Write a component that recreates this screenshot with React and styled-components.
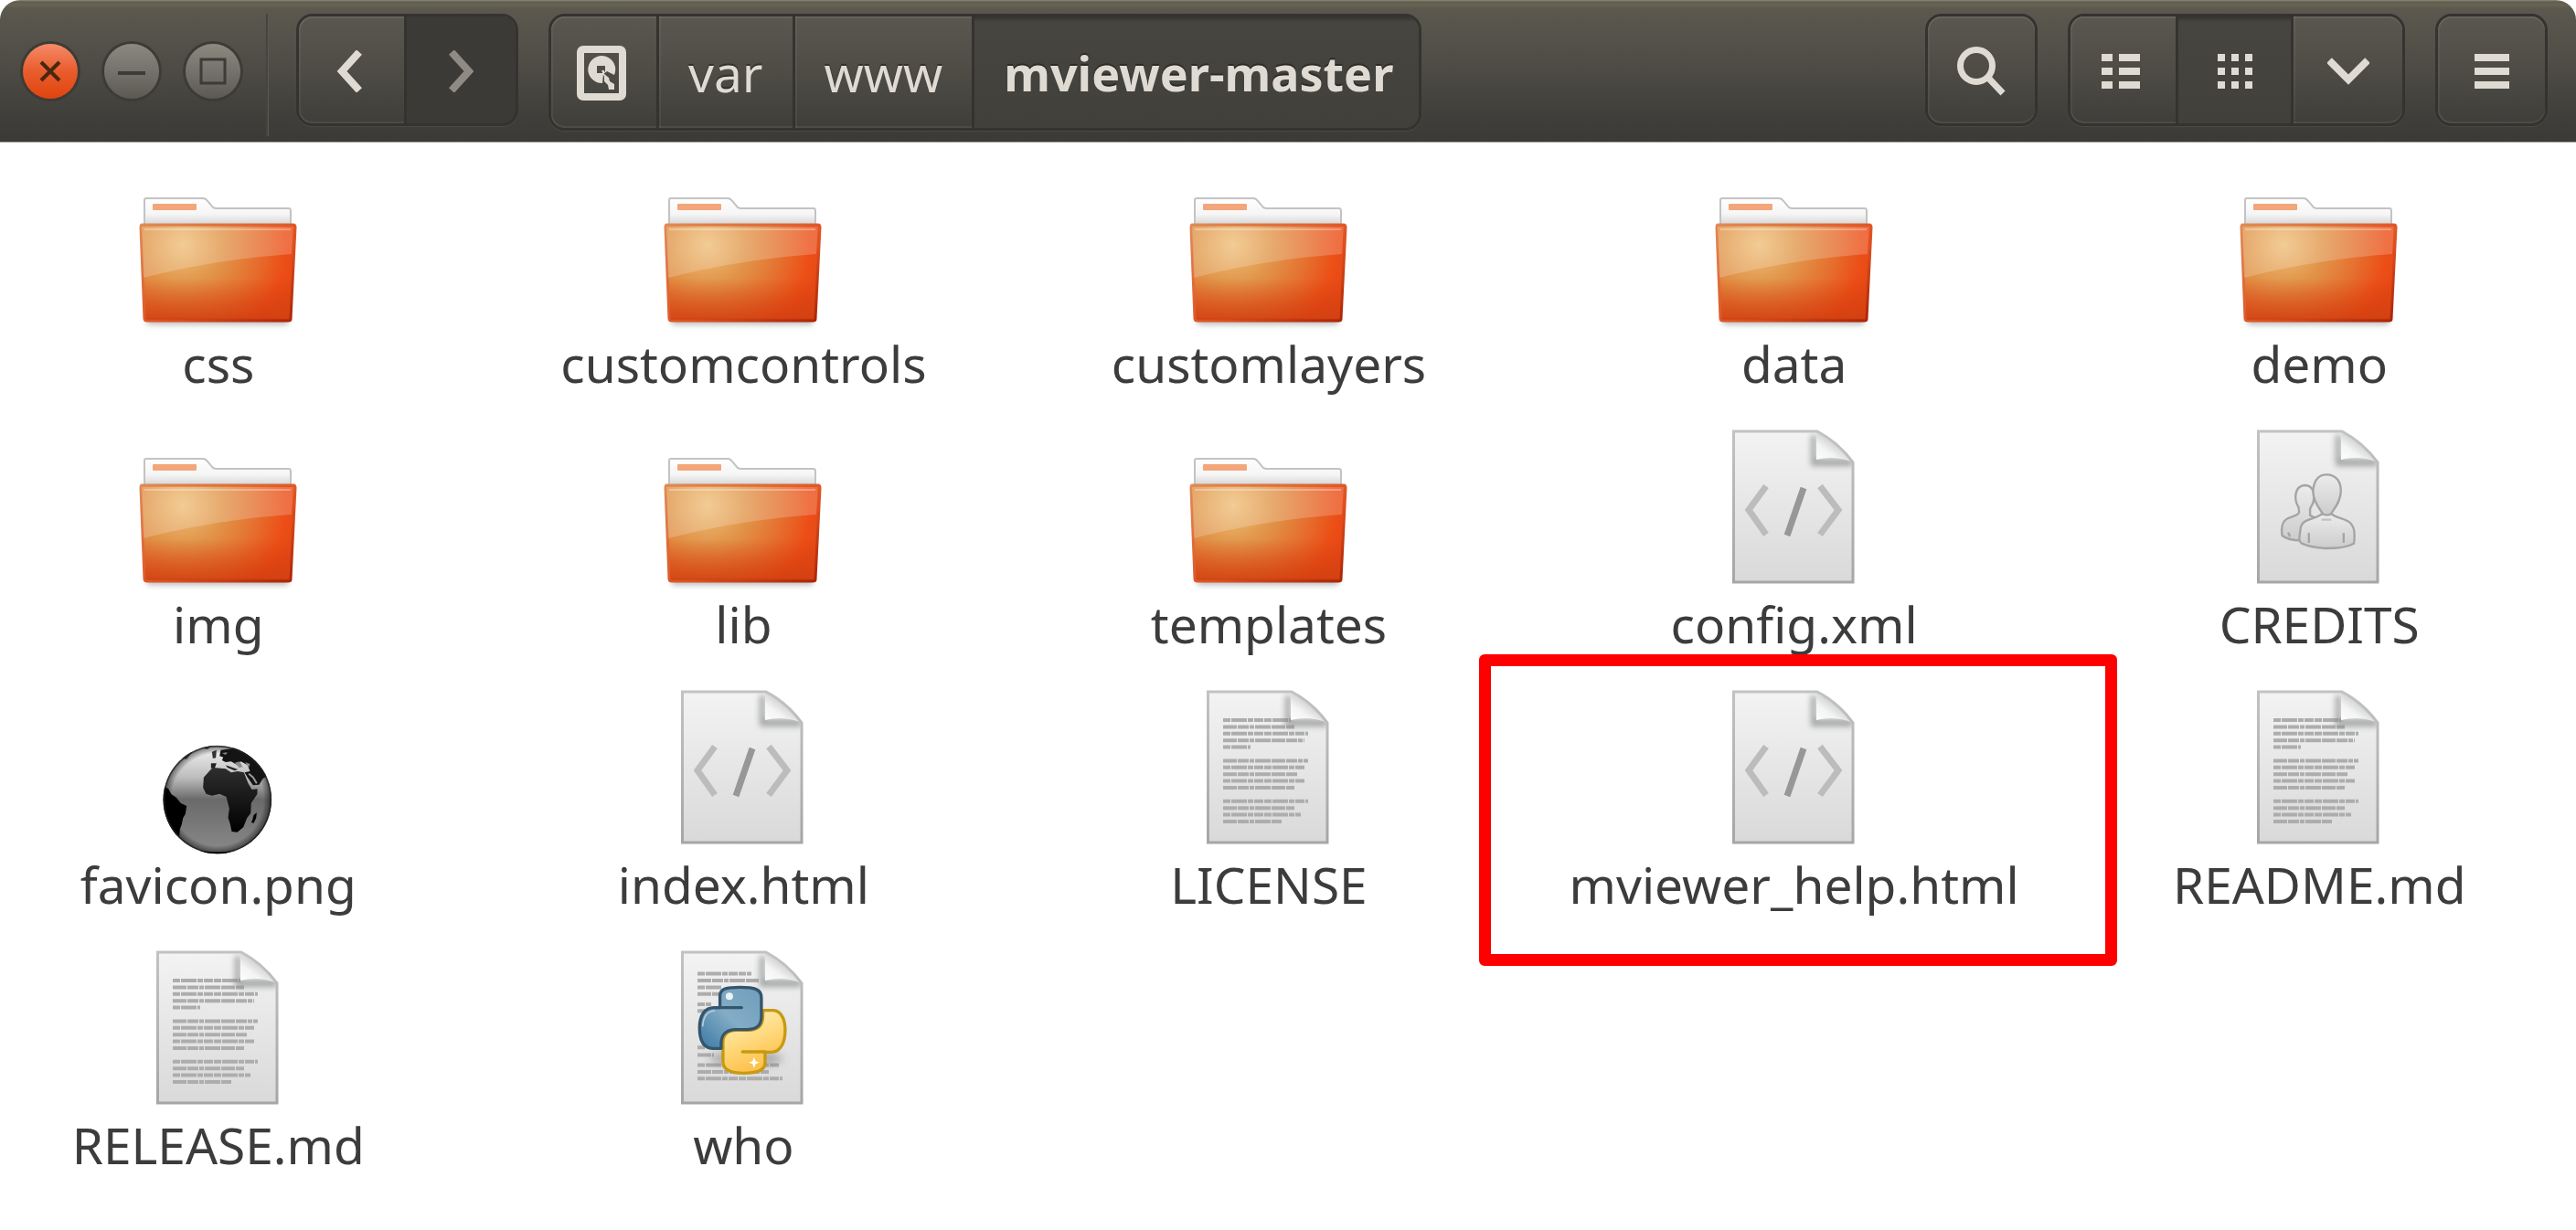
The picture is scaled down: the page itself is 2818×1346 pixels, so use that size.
import React from 'react';
import styled, { createGlobalStyle, css } from 'styled-components';

const GlobalStyle = createGlobalStyle`
  *, *::before, *::after { box-sizing: border-box; }
  body {
    margin: 0;
    background: #fff;
    color: #3c3c3c;
    font-family: 'Noto Sans', 'Open Sans', sans-serif;
    overflow-x: hidden;
  }
  button { font: inherit; color: inherit; }
`;

const Window = styled.div`
  min-height: 100vh;
  display: flex;
  flex-direction: column;
`;

const HeaderBar = styled.header`
  display: flex;
  align-items: flex-start;
  height: 156px;
  padding: 15px 31px 0 25px;
  border-bottom: 1px solid #a29f98;
  border-radius: 22px 22px 0 0;
  background: linear-gradient(
    #8f8d84 0,
    #5f5d50 2px,
    #67644f 5px,
    #5b5850 10px,
    #57544c 30px,
    #4d4b44 75px,
    #3f3e3a 130px,
    #3b3a36 155px
  );
  color: #dfdbd2;
`;

const WindowControls = styled.div`
  display: flex;
  gap: 29px;
  margin-top: 33px;
`;

const WindowButton = styled.button`
  display: grid;
  place-items: center;
  width: 60px;
  height: 60px;
  padding: 0;
  border: 0;
  border-radius: 50%;
  color: ${(p) => (p.$close ? '#46280f' : '#3c3b37')};
  background: ${(p) =>
    p.$close
      ? 'linear-gradient(#f58b68, #e95c2c 50%, #e0440f)'
      : 'linear-gradient(#8b8980, #74726a 50%, #5b5952)'};
  box-shadow: 0 0 0 3px #3d3b36;
`;

const Separator = styled.div`
  flex: none;
  width: 3px;
  height: 134px;
  margin: 0 30px 0 28px;
  border-left: 2px solid #46443f;
  border-right: 1px solid #5a5850;
`;

const ButtonGroup = styled.div`
  display: flex;
  flex: none;
  height: ${(p) => (p.$tall ? '128px' : '123px')};
  margin-right: ${(p) => (p.$last ? '0' : '33px')};
  border: 3px solid #34332f;
  border-radius: 18px;
  box-shadow: 0 1px 1px rgba(255, 255, 255, 0.08);
`;

const Path = styled(ButtonGroup).attrs({ as: 'nav' })``;

const Spacer = styled.div`
  flex: 1;
`;

const pressed = css`
  background: linear-gradient(#33322e 0, #474540 6px, #42403b);
  box-shadow: none;
`;

const ToolButton = styled.button`
  display: flex;
  flex: none;
  align-items: center;
  justify-content: center;
  width: ${(p) => p.$width || 117}px;
  padding: 2px 0 0;
  border: 0;
  background: linear-gradient(#5a574f, #4e4c45 50%, #3f3e3a);
  box-shadow: inset 0 2px 0 rgba(255, 255, 255, 0.07), inset 2px 0 0 rgba(255, 255, 255, 0.05),
    inset 0 -2px 0 rgba(255, 255, 255, 0.07);

  &:first-child { border-radius: 15px 0 0 15px; padding-right: 6px; }
  &:last-child { border-radius: 0 15px 15px 0; }
  &:only-child { border-radius: 15px; padding-right: 0; }
  & + & { border-left: 3px solid #34332f; }

  ${(p) => p.$pressed && pressed}
  ${(p) =>
    p.$dim &&
    css`
      background: #3b3a36;
      color: #8f8b84;
    `}
`;

const Crumb = styled(ToolButton)`
  width: auto;
  padding: 2px 32px 0;
  font-size: 55px;
  line-height: 66px;
  text-shadow: 0 -2px 1px rgba(0, 0, 0, 0.4);
  border-left: 3px solid #34332f;
  ${(p) =>
    p.$pressed &&
    css`
      font-size: 52px;
      font-weight: 700;
      padding: 2px 28px 0 32px;
    `}
`;

const Files = styled.ul`
  display: grid;
  grid-template-columns: repeat(5, minmax(0, 1fr));
  gap: 39px 97px;
  margin: 0;
  padding: 29px 42px 0 0;
  list-style: none;
`;

const FileCell = styled.li`
  position: relative;
  display: flex;
  justify-content: center;
`;

const FileButton = styled.button`
  display: flex;
  flex: none;
  flex-direction: column;
  align-items: center;
  padding: 0;
  border: 0;
  background: none;
  font-size: 55px;
  line-height: 66px;
  white-space: nowrap;
`;

const FileIcon = styled.svg`
  display: block;
  width: 180px;
  height: 180px;
  overflow: visible;
`;

const Highlight = styled.div`
  position: absolute;
  inset: -39px -115px -56px -106px;
  border: 13px solid #f00;
  border-radius: 6px;
  pointer-events: none;
`;

const Glyph = ({ w, h, children }) => (
  <svg width={w} height={h} viewBox={`0 0 ${w} ${h}`} fill="none" stroke="currentColor" aria-hidden="true">
    {children}
  </svg>
);

const rows = [0, 15, 30];

const SearchGlyph = () => (
  <Glyph w={54} h={54}>
    <circle cx="21" cy="21" r="17.500" strokeWidth="7" />
    <path d="M33 33 50 51" strokeWidth="7" />
  </Glyph>
);

const ListGlyph = () => (
  <Glyph w={42} h={38}>
    <g fill="currentColor" stroke="none">
      {rows.map((y) => (
        <React.Fragment key={y}>
          <rect x="0" y={y} width="12" height="8" />
          <rect x="19" y={y} width="23" height="8" />
        </React.Fragment>
      ))}
    </g>
  </Glyph>
);

const GridGlyph = () => (
  <Glyph w={38} h={38}>
    <g fill="currentColor" stroke="none">
      {rows.map((y) => rows.map((x) => <rect key={`${x}-${y}`} x={x} y={y} width="8" height="8" />))}
    </g>
  </Glyph>
);

const MenuGlyph = () => (
  <Glyph w={38} h={38}>
    <g fill="currentColor" stroke="none">
      {rows.map((y) => <rect key={y} x="0" y={y} width="38" height="8" />)}
    </g>
  </Glyph>
);

const DiskGlyph = () => (
  <Glyph w={54} h={60}>
    <rect x="4" y="4" width="46" height="52" rx="3" strokeWidth="8" />
    <g fill="currentColor" stroke="none">
      <path
        fillRule="evenodd"
        d="M28 41A15 15 0 1 1 41 32L33 28 29 31ZM22 22V30H29L31 28V22Z"
      />
      <path d="M27 27 30 27 30 31 35 35 36 39 41 42 41 48 35 48 34 43 30 39 30 34Z" />
    </g>
  </Glyph>
);

const Defs = () => (
  <svg width="0" height="0" style={{ position: 'absolute' }} aria-hidden="true">
    <defs>
      <linearGradient id="page" x1="0" y1="0" x2="0" y2="1">
        <stop offset="0" stopColor="#f3f3f3" />
        <stop offset="1" stopColor="#d9d9d9" />
      </linearGradient>
      <linearGradient id="pageEdge" x1="0" y1="0" x2="0" y2="1">
        <stop offset="0" stopColor="#c2c2c2" />
        <stop offset="1" stopColor="#a6a6a6" />
      </linearGradient>
      <linearGradient id="fold" x1="0" y1="1" x2="0.6" y2="0.3">
        <stop offset="0" stopColor="#ffffff" />
        <stop offset="0.5" stopColor="#f4f4f4" />
        <stop offset="1" stopColor="#c4c6c6" />
      </linearGradient>
      <linearGradient id="folderBack" x1="0" y1="31" x2="0" y2="62" gradientUnits="userSpaceOnUse">
        <stop offset="0" stopColor="#ffffff" />
        <stop offset="0.6" stopColor="#f5f5f5" />
        <stop offset="1" stopColor="#d2d2d2" />
      </linearGradient>
      <radialGradient id="folderFront" cx="51" cy="83" r="125" gradientUnits="userSpaceOnUse">
        <stop offset="0" stopColor="#eec07a" />
        <stop offset="0.35" stopColor="#e1954a" />
        <stop offset="0.65" stopColor="#e5702f" />
        <stop offset="0.9" stopColor="#ec4e16" />
        <stop offset="1" stopColor="#e64a16" />
      </radialGradient>
      <linearGradient id="folderShade" x1="0" y1="60" x2="0" y2="168" gradientUnits="userSpaceOnUse">
        <stop offset="0.55" stopColor="#d43a0c" stopOpacity="0" />
        <stop offset="0.95" stopColor="#cf3e10" stopOpacity="0.75" />
        <stop offset="1" stopColor="#a82608" />
      </linearGradient>
      <linearGradient id="folderEdge" x1="0" y1="0" x2="1" y2="1">
        <stop offset="0" stopColor="#e08a55" />
        <stop offset="0.6" stopColor="#dd4f20" />
        <stop offset="1" stopColor="#a92407" />
      </linearGradient>
      <linearGradient id="sea" x1="0" y1="0" x2="0" y2="1">
        <stop offset="0" stopColor="#f4f4f4" />
        <stop offset="0.3" stopColor="#bcbcbc" />
        <stop offset="0.5" stopColor="#6a6a6a" />
        <stop offset="1" stopColor="#8a8a8a" />
      </linearGradient>
      <radialGradient id="seaRim">
        <stop offset="0.85" stopColor="#000" stopOpacity="0" />
        <stop offset="1" stopColor="#000" stopOpacity="0.55" />
      </radialGradient>
      <linearGradient id="land" x1="0" y1="0" x2="0" y2="1">
        <stop offset="0" stopColor="#2e2e2e" />
        <stop offset="1" stopColor="#000000" />
      </linearGradient>
      <linearGradient id="person" x1="0" y1="0" x2="0" y2="1">
        <stop offset="0" stopColor="#ececec" />
        <stop offset="1" stopColor="#cccccc" />
      </linearGradient>
      <linearGradient id="pyBlue" x1="1" y1="0" x2="0" y2="1">
        <stop offset="0" stopColor="#6f9dbb" />
        <stop offset="0.5" stopColor="#83acc6" />
        <stop offset="1" stopColor="#3b78a4" />
      </linearGradient>
      <linearGradient id="pyYellow" x1="0" y1="0" x2="0.4" y2="1">
        <stop offset="0" stopColor="#fff3cf" />
        <stop offset="0.5" stopColor="#ffdc83" />
        <stop offset="1" stopColor="#fdc04a" />
      </linearGradient>
      <filter id="soft" x="-30%" y="-60%" width="160%" height="220%">
        <feGaussianBlur stdDeviation="3" />
      </filter>
      <filter id="softer" x="-30%" y="-100%" width="160%" height="300%">
        <feGaussianBlur stdDeviation="14" />
      </filter>
      <clipPath id="pageClip">
        <path d="M23 2H115Q138 14 154 36V167H23Z" />
      </clipPath>
      <clipPath id="globeClip">
        <circle cx="533" cy="285" r="178" />
      </clipPath>
    </defs>
  </svg>
);

const Folder = () => (
  <>
    <rect x="12" y="160" width="154" height="10" fill="#888" opacity="0.6" filter="url(#soft)" />
    <path
      d="M9 66V34Q9 32 11 32H73Q76 32 78 35L84 42Q86 43 88 43H167Q169 43 169 46V66Z"
      fill="url(#folderBack)"
      stroke="#c3c3c3"
      strokeWidth="2"
    />
    <rect x="18" y="38" width="48" height="7" rx="1" fill="#f2a67a" />
    <path
      d="M6 61H172Q174 61 174 64L169 164Q169 166 166 166H12Q9 166 9 163L5 64Q5 61 6 61Z"
      fill="url(#folderFront)"
    />
    <path
      d="M6 61H172Q174 61 174 64L169 164Q169 166 166 166H12Q9 166 9 163L5 64Q5 61 6 61Z"
      fill="url(#folderShade)"
      stroke="url(#folderEdge)"
      strokeWidth="3"
    />
    <path d="M6 63H172L170 93Q85 99 8 119Z" fill="#fff" opacity="0.2" />
    <path d="M9 66H169" stroke="#fff" strokeWidth="2" opacity="0.3" />
  </>
);

const Page = ({ children }) => (
  <>
    <path d="M22 168H156" stroke="#777" strokeWidth="3" opacity="0.5" filter="url(#soft)" />
    <path d="M23 2H115Q138 14 154 36V167H23Z" fill="url(#page)" />
    {children}
    <g clipPath="url(#pageClip)">
      <path d="M108 6V40H154V32H114V6Z" fill="#858888" opacity="0.7" filter="url(#soft)" />
      <path d="M114 2V33Q135 28 154 36Q138 14 115 2Z" fill="url(#fold)" />
    </g>
    <path
      d="M23.500 2H115Q138 14 154 36V167H23.500Z"
      fill="none"
      stroke="url(#pageEdge)"
      strokeWidth="3"
    />
  </>
);

const Code = () => (
  <Page>
    <g fill="none" strokeWidth="7">
      <path d="M59 62 40 88 59 115M118 62 138 88 118 115" stroke="#bcbcbc" />
      <path d="M100 64 82 116" stroke="#979797" />
    </g>
  </Page>
);

const TextLines = ({ lines }) => (
  <g stroke="#adadad" strokeWidth="4">
    {lines.map(([row, end], i) => (
      <path
        key={row}
        d={`M40 ${33 + row * 7.4}H${end}`}
        strokeDasharray={i % 2 ? '15 1 12 1 5 1 17 1' : '8 1 17 1 6 1 10 1'}
      />
    ))}
  </g>
);

const textRows = [
  [0, 114], [1, 118], [2, 133], [3, 129], [4, 70],
  [6, 133], [7, 129], [8, 122], [9, 129], [10, 118],
  [12, 133], [13, 118], [14, 125], [15, 104],
];

const Text = () => (
  <Page>
    <TextLines lines={textRows} />
  </Page>
);

const scriptRows = [
  [-1, 99], [0, 107], [1, 66], [2, 64], [3.5, 55], [4.5, 48], [9.9, 48], [11, 58],
  [12.5, 130], [13.5, 118], [14.5, 133],
];

const Python = () => (
  <Page>
    <TextLines lines={scriptRows} />
    <g transform="translate(-23.400 -20) scale(0.3333)">
      <ellipse cx="350" cy="415" rx="120" ry="26" fill="#777" opacity="0.5" filter="url(#softer)" />
      <g strokeWidth="10" strokeLinejoin="round" strokeLinecap="round">
        <path
          d="M405 257H440C470 260 478 295 478 322C478 360 465 392 435 394H412V430C412 455 385 463 342 463C298 463 274 450 274 425V362C274 335 290 322 320 322H365C395 318 405 300 405 275Z"
          fill="url(#pyYellow)"
          stroke="#c79a10"
        />
        <path d="M338 393H412" stroke="#c79a10" />
        <path
          d="M264 248V210C264 186 285 181 330 181C378 181 400 188 400 215V275C400 308 385 318 355 320H312C280 322 268 342 268 365V382H240C207 380 197 350 197 314C197 272 215 248 245 248Z"
          fill="url(#pyBlue)"
          stroke="#34556c"
        />
        <path d="M245 248H335" stroke="#34556c" />
      </g>
      <path d="M207 310C210 275 222 260 248 258" fill="none" stroke="#b5cede" strokeWidth="5" />
      <circle cx="295" cy="211" r="12" fill="#fff" opacity="0.85" />
      <path d="M376 410 381 424 394 428 381 433 376 446 371 433 358 428 371 424Z" fill="#fff" />
    </g>
  </Page>
);

const People = () => (
  <Page>
    <g transform="translate(-67.200 -20) scale(0.3333)" fill="url(#person)" stroke="#a4a4a4" strokeWidth="7">
      <path d="M404 315C388 290 390 246 424 243C455 243 458 275 452 300L442 320V342L470 355V425H412C385 424 362 418 350 408C347 385 348 365 362 356C378 345 402 345 406 332Z" />
      <path d="M480 338C455 358 412 350 410 390C408 412 402 424 414 434C440 445 465 450 498 450C535 450 565 446 586 434C590 400 588 376 568 362C548 350 525 350 514 338Z" />
      <path d="M496 208C465 208 452 235 452 265C452 300 475 320 484 338Q498 344 510 338C520 320 543 298 543 262C543 232 528 208 496 208Z" />
      <path d="M438 400V432M552 400V432" fill="none" />
      <path d="M370 398 376 412" fill="none" />
      <path d="M480 356H512" fill="none" stroke="#c2c2c2" />
    </g>
  </Page>
);

const Globe = () => (
  <g transform="translate(-88.800 25) scale(0.3333)">
    <g clipPath="url(#globeClip)">
      <circle cx="533" cy="285" r="178" fill="url(#sea)" />
      <circle cx="533" cy="285" r="178" fill="url(#seaRim)" />
      <path d="M355 240 372 250 382 268 398 278 412 296 432 306 428 332 420 346 416 366 410 382 408 405 380 400 350 330Z" />
      <path
        fill="url(#land)"
        d="M512 185 520 180 560 184 578 196 600 192 620 196 634 232 646 252 664 250 664 266 644 296 642 330 630 346 618 376 598 392 580 390 574 362 568 344 572 314 562 276 540 266 515 272 496 266 486 246 488 212Z"
      />
      <path d="M648 352 652 336 662 328 660 346 652 362 644 360Z" />
      <path d="M544 122 580 118 600 110 640 130 690 180 700 206 682 216 670 236 650 238 632 212 622 196 640 192 632 172 610 160 596 170 578 160 560 162 548 156 552 146 540 142Z" fill="#141414" />
      <path d="M512 166H530L524 182H512ZM560 172 600 186 590 190 566 180Z" fill="#222" />
      <path d="M515 128 530 122 528 148 518 150ZM468 112 520 104 500 120ZM410 150 440 124 450 130 432 152Z" fill="#333" />
      <path d="M590 164 606 160 616 178 604 180ZM624 162 640 168 636 180ZM548 132 566 130 560 138Z" fill="#8b8b8b" />
      <path d="M636 200 650 212 662 232" fill="none" stroke="#999" strokeWidth="6" />
      <circle cx="533" cy="285" r="176" fill="none" stroke="#222" strokeWidth="7" opacity="0.75" />
      <path d="M475 459Q533 466 592 459" fill="none" stroke="#000" strokeWidth="10" />
    </g>
  </g>
);

const icons = { folder: Folder, code: Code, text: Text, python: Python, people: People, globe: Globe };

const files = [
  ['css', 'folder'],
  ['customcontrols', 'folder'],
  ['customlayers', 'folder'],
  ['data', 'folder'],
  ['demo', 'folder'],
  ['img', 'folder'],
  ['lib', 'folder'],
  ['templates', 'folder'],
  ['config.xml', 'code'],
  ['CREDITS', 'people'],
  ['favicon.png', 'globe'],
  ['index.html', 'code'],
  ['LICENSE', 'text'],
  ['mviewer_help.html', 'code', true],
  ['README.md', 'text'],
  ['RELEASE.md', 'text'],
  ['who', 'python'],
];

export default function App() {
  return (
    <Window>
      <GlobalStyle />
      <Defs />
      <HeaderBar>
        <WindowControls>
          <WindowButton $close aria-label="Close">
            <Glyph w={24} h={24}><path d="M2 2 22 22M22 2 2 22" strokeWidth="4" /></Glyph>
          </WindowButton>
          <WindowButton aria-label="Minimize">
            <Glyph w={30} h={24}><path d="M0 14H30" strokeWidth="4" /></Glyph>
          </WindowButton>
          <WindowButton aria-label="Maximize">
            <Glyph w={30} h={30}><rect x="2" y="2" width="26" height="26" strokeWidth="3" /></Glyph>
          </WindowButton>
        </WindowControls>
        <Separator />
        <ButtonGroup>
          <ToolButton $width={115} aria-label="Back">
            <Glyph w={32} h={46}><path d="M27 2 8 23 27 44" strokeWidth="8" /></Glyph>
          </ToolButton>
          <ToolButton $width={122} $pressed $dim aria-label="Forward">
            <Glyph w={32} h={46}><path d="M5 2 24 23 5 44" strokeWidth="8" /></Glyph>
          </ToolButton>
        </ButtonGroup>
        <Path $tall aria-label="Location">
          <ToolButton $width={115} aria-label="Computer"><DiskGlyph /></ToolButton>
          <Crumb>var</Crumb>
          <Crumb>www</Crumb>
          <Crumb $pressed aria-current="page">mviewer-master</Crumb>
        </Path>
        <Spacer />
        <ButtonGroup>
          <ToolButton aria-label="Search"><SearchGlyph /></ToolButton>
        </ButtonGroup>
        <ButtonGroup>
          <ToolButton $width={115} aria-label="List view"><ListGlyph /></ToolButton>
          <ToolButton $width={126} $pressed aria-label="Icon view"><GridGlyph /></ToolButton>
          <ToolButton $width={122} aria-label="View options">
            <Glyph w={46} h={36}><path d="M2 6 23 27 44 6" strokeWidth="8" /></Glyph>
          </ToolButton>
        </ButtonGroup>
        <ButtonGroup $last>
          <ToolButton aria-label="Menu"><MenuGlyph /></ToolButton>
        </ButtonGroup>
      </HeaderBar>
      <main>
        <Files>
          {files.map(([name, kind, marked]) => {
            const Drawing = icons[kind];
            return (
              <FileCell key={name}>
                <FileButton>
                  <FileIcon viewBox="0 0 180 180" aria-hidden="true"><Drawing /></FileIcon>
                  {name}
                </FileButton>
                {marked && <Highlight />}
              </FileCell>
            );
          })}
        </Files>
      </main>
    </Window>
  );
}
